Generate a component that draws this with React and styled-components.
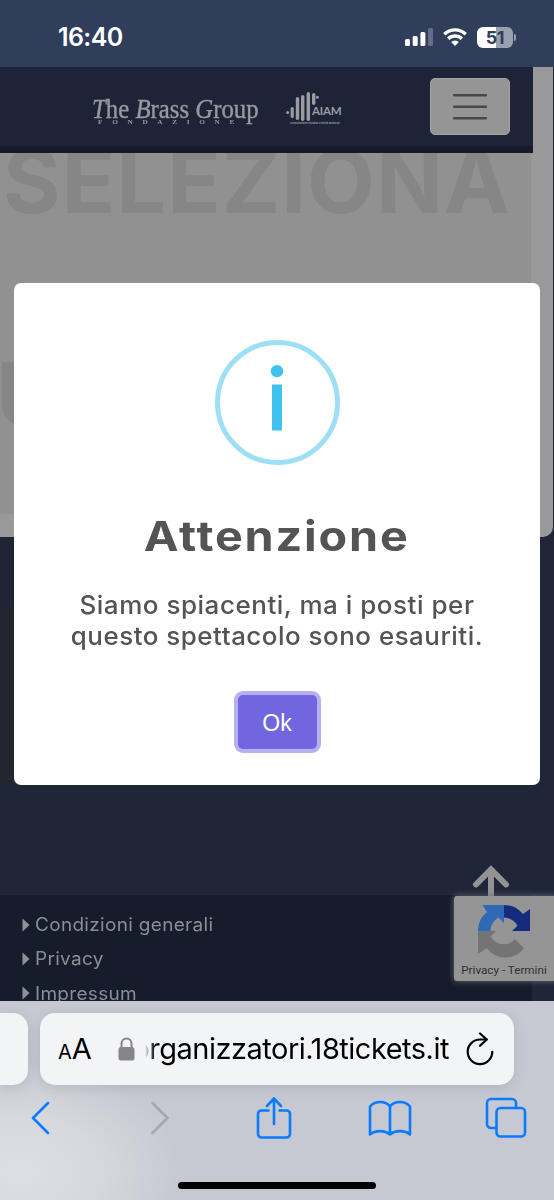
import React from "react";
import styled, { createGlobalStyle } from "styled-components";

const links = ["Condizioni generali", "Privacy", "Impressum"];

function StatusBar() {
  return (
    <StatusContainer>
      <Time>16:40</Time>
      <StatusIcons>
        <svg width="28" height="18" viewBox="0 0 28 18" fill="#fff">
          <rect x="0" y="11" width="5" height="7" rx="1.5" />
          <rect x="7.7" y="8" width="5" height="10" rx="1.5" />
          <rect x="15.4" y="4" width="5" height="14" rx="1.5" />
          <rect x="23" y="0" width="5" height="18" rx="1.5" opacity="0.25" />
        </svg>
        <svg
          width="24"
          height="18"
          viewBox="0 0 24 18"
          fill="none"
          stroke="#fff"
          strokeWidth="3.4"
        >
          <path d="M1.3 6.3a15.2 15.2 0 0 1 21.4 0" />
          <path d="M5.2 10.8a9.7 9.7 0 0 1 13.6 0" />
          <path
            d="M12 18l-3.8-3.9a5.4 5.4 0 0 1 7.6 0z"
            fill="#fff"
            stroke="none"
          />
        </svg>
        <Battery>
          <BatteryLevel>51</BatteryLevel>
          <BatteryTip />
        </Battery>
      </StatusIcons>
    </StatusContainer>
  );
}

function Header() {
  return (
    <HeaderContainer>
      <BrassLogo>
        <BrassName>
          <i>T</i>he <i>B</i>rass <i>G</i>roup
        </BrassName>
        <BrassSub>FONDAZIONE</BrassSub>
      </BrassLogo>
      <AiamLogo>
        <svg width="56" height="33" viewBox="0 0 56 33" fill="#9a9ca1">
          <circle cx="1.6" cy="20.5" r="1.5" />
          <rect x="4.6" y="15" width="3.2" height="11" rx="1.6" />
          <rect x="9.8" y="5" width="3.4" height="23" rx="1.7" />
          <rect x="15" y="3" width="3.4" height="26" rx="1.7" />
          <rect x="20.6" y="0" width="3.4" height="29" rx="1.7" />
          <rect x="26" y="1" width="3.4" height="12" rx="1.7" />
          <circle cx="31.4" cy="5.3" r="1.5" />
        </svg>
        <AiamName>AIAM</AiamName>
        <AiamSub>Associazione Italiana Attività Musicali</AiamSub>
      </AiamLogo>
      <MenuButton>
        <svg width="34" height="28" viewBox="0 0 34 28" fill="#484848">
          <rect y="1" width="34" height="2.6" rx="1" />
          <rect y="12.5" width="34" height="2.6" rx="1" />
          <rect y="24" width="34" height="2.6" rx="1" />
        </svg>
      </MenuButton>
    </HeaderContainer>
  );
}

function Recaptcha() {
  return (
    <RecaptchaBadge>
      <svg width="54" height="54" viewBox="0 0 54 54">
        <path
          d="M53 5v22H35l5.5-5.5C37 16 33 14 27 13.5V1c8 0 14 3 19 9z"
          fill="#152c7e"
        />
        <path
          d="M5.5 1H27v18l-5.5-5.5C16 17 14 21 13.5 27H1c0-8 3-14 9-19z"
          fill="#3069b5"
        />
        <path
          d="M1 27h18l-5.5 5.5C19 41.500 31 43 37.500 35L47 44c-9 12.500-28 13-37 0l-9 6z"
          fill="#747474"
        />
      </svg>
      <p>Privacy - Termini</p>
    </RecaptchaBadge>
  );
}

function Alert() {
  return (
    <Overlay>
      <AlertBox>
        <InfoIcon>
          <svg width="14" height="66" viewBox="0 0 14 66" fill="#3fc3ee">
            <circle cx="7" cy="6.2" r="6.2" />
            <rect x="2" y="19.5" width="10" height="46" />
          </svg>
        </InfoIcon>
        <h2>Attenzione</h2>
        <Message>
          <Line $stretch={1.04}>Siamo spiacenti, ma i posti per</Line>
          <Line $stretch={1.036}>questo spettacolo sono esauriti.</Line>
        </Message>
        <OkButton>Ok</OkButton>
      </AlertBox>
    </Overlay>
  );
}

function BrowserBar() {
  return (
    <BrowserContainer>
      <Tabs>
        <PreviousTab />
        <AddressBar>
          <TextSize>
            <small>A</small>A
          </TextSize>
          <svg width="17" height="24" viewBox="0 0 17 24">
            <rect x="0.5" y="10" width="16" height="13.5" rx="2.5" fill="#868688" />
            <path
              d="M3.5 11V6.5a5 5 0 0 1 10 0V11"
              fill="none"
              stroke="#868688"
              strokeWidth="2"
            />
          </svg>
          <Url>
            <span>organizzatori.18tickets.it</span>
          </Url>
          <svg
            width="28"
            height="34"
            viewBox="0 0 28 34"
            fill="none"
            stroke="#000"
            strokeWidth="2.2"
            strokeLinecap="round"
            strokeLinejoin="round"
          >
            <path d="M20.5 7.500H14A12.300 12.300 0 1 0 26.300 19.800" />
            <path d="M14 1.500l6.800 6-6.800 6.300" />
          </svg>
        </AddressBar>
      </Tabs>
      <Actions>
        <Action>
          <svg width="24" height="34" viewBox="0 0 24 34">
            <path d="M18 2L3 17l15 15" />
          </svg>
        </Action>
        <Action>
          <svg width="24" height="34" viewBox="0 0 24 34">
            <path d="M6.5 2l15 15-15 15" stroke="#a5a8ae" />
          </svg>
        </Action>
        <Action>
          <svg width="36" height="42" viewBox="0 0 36 42">
            <path d="M12.5 13.5H5.500a3.500 3.500 0 0 0-3.500 3.500v20a3.500 3.500 0 0 0 3.500 3.500h25a3.500 3.500 0 0 0 3.500-3.500V17a3.500 3.500 0 0 0-3.500-3.500H23.500" />
            <path d="M18 27V2M11 9l7-7.500L25 9" />
          </svg>
        </Action>
        <Action>
          <svg width="44" height="38" viewBox="0 0 44 38">
            <path d="M22 7.500C17.500 1.500 7 1.500 2 7.500V35.500C7 31 17 31 22 35.500C27 31 37 31 42 35.500V7.500C37 1.500 26.500 1.500 22 7.500zV35.500" />
          </svg>
        </Action>
        <Action>
          <svg width="42" height="42" viewBox="0 0 42 42">
            <path d="M11.500 31H6a4 4 0 0 1-4-4V6a4 4 0 0 1 4-4h21a4 4 0 0 1 4 4v5" />
            <rect x="11.5" y="11" width="28.5" height="28.5" rx="4" />
          </svg>
        </Action>
      </Actions>
      <HomeIndicator />
    </BrowserContainer>
  );
}

function App() {
  return (
    <Phone>
      <GlobalStyle />
      <StatusBar />
      <WebPage>
        <Sheet>
          <Header />
          <Hero>
            <HeroTitle>SELEZIONA</HeroTitle>
            <HeroTitle>UN</HeroTitle>
          </Hero>
        </Sheet>
        <Strip />
        <Footer>
          {links.map((link) => (
            <FooterLink key={link}>
              <svg width="8" height="14" viewBox="0 0 8 14" fill="#8f9196">
                <path d="M0.5 0.5L7.500 7l-7 6.500z" />
              </svg>
              <span>{link}</span>
            </FooterLink>
          ))}
        </Footer>
        <ScrollTop>
          <svg
            width="38"
            height="34"
            viewBox="0 0 38 34"
            fill="none"
            stroke="#939395"
            strokeWidth="6"
            strokeLinecap="round"
          >
            <path d="M19 4.500v30M4 19.500l15-15 15 15" />
          </svg>
        </ScrollTop>
        <Recaptcha />
        <Alert />
      </WebPage>
      <BrowserBar />
    </Phone>
  );
}

export default App;

const GlobalStyle = createGlobalStyle`
  * {
    box-sizing: border-box;
  }
  body {
    margin: 0;
    font-family: Inter, "Liberation Sans", sans-serif;
  }
  h1, h2, p {
    margin: 0;
  }
  svg {
    display: block;
    flex-shrink: 0;
  }
`;

const Phone = styled.div`
  width: 554px;
  height: 1200px;
  display: flex;
  flex-direction: column;
  overflow: hidden;
`;

const StatusContainer = styled.div`
  height: 67px;
  padding: 7px 41px 0 58px;
  display: flex;
  align-items: center;
  justify-content: space-between;
  background-color: #313e5b;
`;

const Time = styled.span`
  color: white;
  font-size: 25px;
  font-weight: 600;
  letter-spacing: -0.6px;
`;

const StatusIcons = styled.div`
  display: flex;
  align-items: center;
  gap: 10px;
`;

const Battery = styled.div`
  position: relative;
  width: 36px;
  height: 21px;
  border-radius: 6px;
  background: linear-gradient(90deg, #fff 53%, #98a0b0 53%);
`;

const BatteryLevel = styled.span`
  display: block;
  color: #313e5b;
  font-size: 18px;
  line-height: 21px;
  font-weight: 700;
  text-align: center;
  letter-spacing: -0.5px;
`;

const BatteryTip = styled.span`
  position: absolute;
  right: -3px;
  top: 7px;
  width: 2px;
  height: 7px;
  border-radius: 0 3px 3px 0;
  background-color: #98a0b0;
`;

const WebPage = styled.div`
  position: relative;
  height: 934px;
  overflow: hidden;
  background-color: #1f2638;
`;

const Sheet = styled.div`
  width: 552.5px;
  height: 470px;
  background-color: #999;
  border-bottom-right-radius: 10px;
`;

const HeaderContainer = styled.div`
  width: 533px;
  height: 86px;
  padding: 11px 23px 0 92px;
  display: flex;
  align-items: flex-start;
  background-color: #1e2437;
  border-bottom: 7px solid #151b2b;
`;

const BrassLogo = styled.div`
  width: 166px;
  padding-top: 17px;
  color: #98999e;
  font-family: "Liberation Serif", serif;
`;

const BrassName = styled.div`
  font-size: 28px;
  line-height: 28px;
  white-space: nowrap;
  -webkit-text-stroke: 0.4px #98999e;
  transform: scaleX(0.885);
  transform-origin: left;
`;

const BrassSub = styled.div`
  margin-top: -4px;
  padding-left: 5px;
  font-size: 6px;
  line-height: 6px;
  font-weight: 700;
  letter-spacing: 8px;
  white-space: nowrap;
  transform: scaleX(1.21);
  transform-origin: left;
`;

const AiamLogo = styled.div`
  position: relative;
  width: 56px;
  margin: 14px auto 0 28px;
  color: #9a9ca1;
`;

const AiamName = styled.span`
  position: absolute;
  left: 26px;
  top: 12px;
  font-family: Lato, sans-serif;
  font-size: 11.5px;
  line-height: 14px;
  font-weight: 700;
  letter-spacing: -0.2px;
`;

const AiamSub = styled.span`
  position: absolute;
  left: 4px;
  top: 29px;
  font-size: 2.7px;
  line-height: 4px;
  font-weight: 700;
  white-space: nowrap;
`;

const MenuButton = styled.div`
  width: 80px;
  height: 57px;
  display: flex;
  align-items: center;
  justify-content: center;
  background-color: #959595;
  border: 1px solid #a3a3a5;
  border-radius: 5px;
`;

const Hero = styled.div`
  width: 531px;
  height: 361px;
  overflow: hidden;
  background-color: #919191;
`;

const HeroTitle = styled.h1`
  height: 213px;
  margin-top: -26px;
  margin-bottom: 26px;
  padding-left: 3px;
  color: #868686;
  font-size: 88px;
  line-height: 108px;
  font-weight: 700;
  letter-spacing: 1.1px;
  white-space: nowrap;
  & + & {
    padding-left: 0;
    margin-left: -4px;
  }
`;

const Strip = styled.div`
  width: 533px;
  height: 249px;
  border-top: 70px solid #1e2537;
  background-color: #23262e;
`;

const Footer = styled.div`
  width: 532px;
  height: 106px;
  margin-top: 109px;
  padding: 12.5px 0 0 22px;
  background-color: #151c2b;
`;

const FooterLink = styled.div`
  height: 34.3px;
  display: flex;
  align-items: center;
  gap: 5px;
  color: #8b8e94;
  font-size: 18px;
  letter-spacing: 0.3px;
  white-space: nowrap;
  span {
    transform: scaleX(1.055);
    transform-origin: left;
  }
`;

const ScrollTop = styled.div`
  position: absolute;
  left: 472px;
  top: 798px;
`;

const RecaptchaBadge = styled.div`
  position: absolute;
  left: 454px;
  top: 829px;
  width: 104px;
  height: 85px;
  padding: 8px 4px 0 0;
  display: flex;
  flex-direction: column;
  align-items: center;
  background-color: #959595;
  border-radius: 3px;
  box-shadow: 0 0 6px #6b6d70;
  p {
    margin-top: 5px;
    color: #303030;
    font-family: Roboto, sans-serif;
    font-size: 11.7px;
    line-height: 15px;
    white-space: nowrap;
  }
`;

const Overlay = styled.div`
  position: absolute;
  inset: 0;
  display: flex;
  align-items: center;
  justify-content: center;
`;

const AlertBox = styled.div`
  width: 526px;
  height: 502px;
  padding-top: 57px;
  display: flex;
  flex-direction: column;
  align-items: center;
  color: #545454;
  background-color: white;
  border-radius: 7px;
  h2 {
    margin-top: 44px;
    font-size: 41px;
    line-height: 54px;
    font-weight: 700;
    letter-spacing: 1.6px;
    white-space: nowrap;
    transform: scaleX(1.14);
  }
`;

const InfoIcon = styled.div`
  width: 125px;
  height: 125px;
  padding-top: 20px;
  display: flex;
  justify-content: center;
  border: 5.5px solid #9de0f6;
  border-radius: 50%;
`;

const Message = styled.div`
  margin-top: 27px;
  text-align: center;
`;

const Line = styled.p`
  font-size: 25px;
  line-height: 31px;
  font-weight: 500;
  letter-spacing: 0.5px;
  white-space: nowrap;
  transform: scaleX(${(props) => props.$stretch});
`;

const OkButton = styled.div`
  width: 79px;
  height: 54px;
  margin-top: 43px;
  border-radius: 5px;
  color: white;
  background-color: #7066e0;
  box-shadow: 0 0 0 4px #b7b0f0;
  font-family: "Liberation Sans", Arial, sans-serif;
  font-size: 23px;
  line-height: 56px;
  text-align: center;
`;

const BrowserContainer = styled.div`
  height: 199px;
  display: flex;
  flex-direction: column;
  background: radial-gradient(
      ellipse 160px 110px at 20px 170px,
      #dedfe4 0%,
      #d6d8dd 50%,
      transparent 100%
    ),
    #c6c9d1;
`;

const Tabs = styled.div`
  height: 84px;
  padding-top: 12px;
  display: flex;
  gap: 12px;
`;

const PreviousTab = styled.div`
  width: 28px;
  height: 72px;
  border-radius: 0 15px 15px 0;
  background-color: #f3f4f6;
  box-shadow: 0 3px 14px rgba(0, 0, 0, 0.1);
`;

const AddressBar = styled.div`
  width: 474px;
  height: 72px;
  padding: 0 20px 0 18px;
  display: flex;
  align-items: center;
  border-radius: 15px;
  background-color: #f3f4f6;
  box-shadow: 0 3px 14px rgba(0, 0, 0, 0.1);
`;

const TextSize = styled.div`
  width: 60px;
  padding-top: 3px;
  color: black;
  font-size: 29px;
  line-height: 36px;
  small {
    font-size: 20px;
  }
`;

const Url = styled.div`
  width: 304px;
  height: 40px;
  margin: 0 auto 0 10px;
  display: flex;
  justify-content: flex-end;
  overflow: hidden;
  color: black;
  font-size: 29px;
  line-height: 40px;
  letter-spacing: -0.5px;
  white-space: nowrap;
  mask-image: linear-gradient(90deg, transparent, #000 10px);
`;

const Actions = styled.div`
  height: 66px;
  margin-left: -16px;
  display: flex;
`;

const Action = styled.div`
  width: 116px;
  flex-shrink: 0;
  display: flex;
  align-items: center;
  justify-content: center;
  svg {
    fill: none;
    stroke: #0a7aff;
    stroke-width: 2.6px;
    stroke-linecap: round;
    stroke-linejoin: round;
  }
`;

const HomeIndicator = styled.div`
  width: 198px;
  height: 7px;
  margin: 31px auto 0;
  border-radius: 4px;
  background-color: black;
`;
